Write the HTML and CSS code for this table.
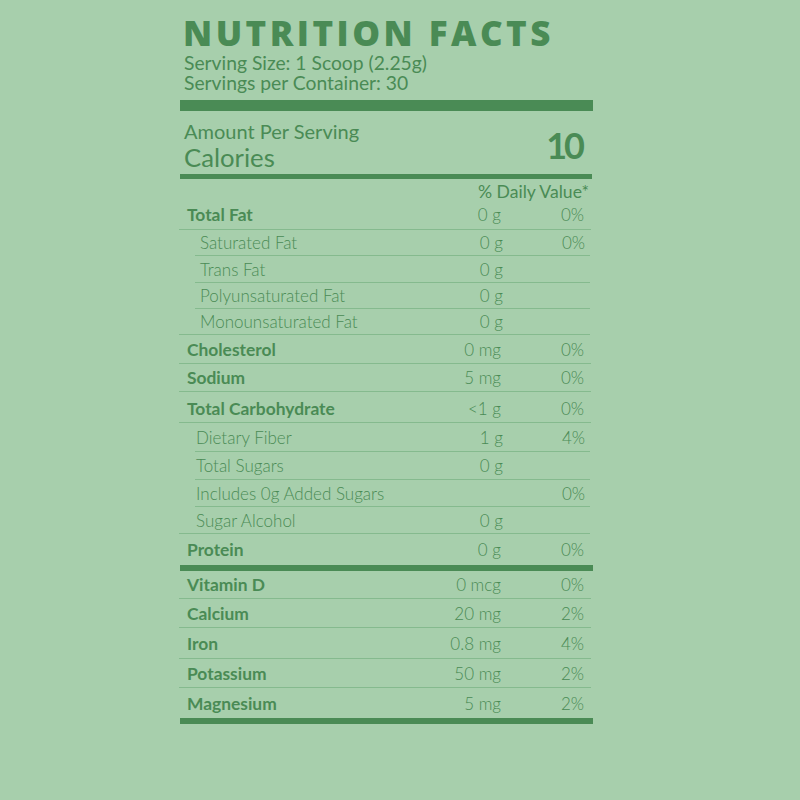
FILE: index.html
```html
<!DOCTYPE html>
<html lang="en">
<head>
<meta charset="utf-8">
<title>Nutrition Facts</title>
<link rel="stylesheet" href="styles.css">
</head>
<body>
<div class="page">
  <section class="label">
    <h1 class="title">NUTRITION FACTS</h1>
    <p class="serving first">Serving Size: 1 Scoop (2.25g)</p>
    <p class="serving">Servings per Container: 30</p>
    <div class="bar bar-thick"></div>
    <div class="calories">
      <div class="cal-left">
        <div class="amount">Amount Per Serving</div>
        <div class="cal-word">Calories</div>
      </div>
      <div class="cal-num">10</div>
    </div>
    <div class="bar bar-mid"></div>
    <div class="dv-head">% Daily Value*</div>

    <div class="row main r31"><span class="name">Total Fat</span><span class="val">0 g</span><span class="pct">0%</span></div>
    <div class="row sub fat r26"><span class="name">Saturated Fat</span><span class="val">0 g</span><span class="pct">0%</span></div>
    <div class="row sub fat r27"><span class="name">Trans Fat</span><span class="val">0 g</span><span class="pct"></span></div>
    <div class="row sub fat r26"><span class="name">Polyunsaturated Fat</span><span class="val">0 g</span><span class="pct"></span></div>
    <div class="row sub fat r26 last"><span class="name">Monounsaturated Fat</span><span class="val">0 g</span><span class="pct"></span></div>
    <div class="row main r29"><span class="name">Cholesterol</span><span class="val">0 mg</span><span class="pct">0%</span></div>
    <div class="row main r28"><span class="name">Sodium</span><span class="val">5 mg</span><span class="pct">0%</span></div>
    <div class="row main r31 carb-head"><span class="name">Total Carbohydrate</span><span class="val">&lt;1 g</span><span class="pct">0%</span></div>
    <div class="row sub carb r29"><span class="name">Dietary Fiber</span><span class="val">1 g</span><span class="pct">4%</span></div>
    <div class="row sub carb r28"><span class="name">Total Sugars</span><span class="val">0 g</span><span class="pct"></span></div>
    <div class="row sub carb r27"><span class="name">Includes 0g Added Sugars</span><span class="val"></span><span class="pct">0%</span></div>
    <div class="row sub carb r27 last"><span class="name">Sugar Alcohol</span><span class="val">0 g</span><span class="pct"></span></div>
    <div class="row main r31 noline"><span class="name">Protein</span><span class="val">0 g</span><span class="pct">0%</span></div>
    <div class="bar bar-sep"></div>
    <div class="row main r28"><span class="name">Vitamin D</span><span class="val">0 mcg</span><span class="pct">0%</span></div>
    <div class="row main r29"><span class="name">Calcium</span><span class="val">20 mg</span><span class="pct">2%</span></div>
    <div class="row main r31"><span class="name">Iron</span><span class="val">0.8 mg</span><span class="pct">4%</span></div>
    <div class="row main r29"><span class="name">Potassium</span><span class="val">50 mg</span><span class="pct">2%</span></div>
    <div class="row main r30 noline"><span class="name">Magnesium</span><span class="val">5 mg</span><span class="pct">2%</span></div>
    <div class="bar bar-sep"></div>
  </section>
</div>
</body>
</html>
```
FILE: styles.css
```css
html, body {
  margin: 0;
  padding: 0;
  background: #a7cfac;
}
body {
  font-family: Lato, "Open Sans", sans-serif;
  color: #4a8b55;
  width: 800px;
  height: 800px;
  overflow: hidden;
}
.page {
  padding: 15px 0 0 180px;
}
.label {
  width: 413px;
  display: flex;
  flex-direction: column;
}
.title {
  margin: 0 0 0 3px;
  font-family: "Open Sans", Lato, sans-serif;
  font-size: 35px;
  font-weight: 800;
  letter-spacing: 3.45px;
  line-height: 36px;
  white-space: nowrap;
}
.serving {
  margin: 0 0 0 4px;
  font-size: 19.3px;
  line-height: 20px;
  font-weight: 400;
}
.serving.first {
  margin-top: 2px;
}
.bar {
  background: #4a8b55;
}
.bar-thick {
  height: 11px;
  margin-top: 7px;
}
.calories {
  display: flex;
  justify-content: space-between;
  align-items: flex-end;
  padding: 9px 11px 2px 4px;
}
.amount {
  font-size: 20px;
  line-height: 22px;
}
.cal-word {
  font-size: 25.7px;
  line-height: 30px;
}
.cal-num {
  font-size: 36px;
  font-weight: 700;
  line-height: 40px;
  letter-spacing: -3px;
  margin-bottom: 7px;
}
.bar-mid {
  height: 5px;
  margin-right: 1px;
}
.dv-head {
  text-align: right;
  font-size: 17.6px;
  height: 20px;
  line-height: 26px;
  padding-right: 4px;
}
.row {
  display: flex;
  align-items: center;
  border-bottom: 1px solid #85ba8e;
  box-sizing: border-box;
  margin-left: -1px;
  margin-right: 2px;
  white-space: nowrap;
}
.row.noline {
  border-bottom: none;
}
.row .name {
  flex: 1;
}
.row .val {
  width: 80px;
  text-align: right;
}
.row .pct {
  width: 83px;
  text-align: right;
  padding-right: 7px;
}
.main .name {
  font-weight: 700;
  font-size: 17.4px;
  padding-left: 8px;
}
.carb-head {
  padding-top: 3px;
}
.val, .pct {
  font-weight: 300;
  font-size: 17px;
}
.sub {
  margin-left: 15px;
  margin-right: 3px;
}
.sub .name {
  font-weight: 300;
  font-size: 17px;
}
.fat .name {
  padding-left: 5px;
}
.carb .name {
  padding-left: 1px;
}
.sub .pct {
  width: 82px;
  padding-right: 5px;
}
.sub.last {
  margin-left: -1px;
}
.sub.fat.last .name {
  padding-left: 21px;
}
.sub.carb.last .name {
  padding-left: 17px;
}
.r26 { height: 26px; }
.r27 { height: 27px; }
.r28 { height: 28px; }
.r29 { height: 29px; }
.r30 { height: 30px; }
.r31 { height: 31px; }
.bar-sep {
  height: 6px;
}
```
